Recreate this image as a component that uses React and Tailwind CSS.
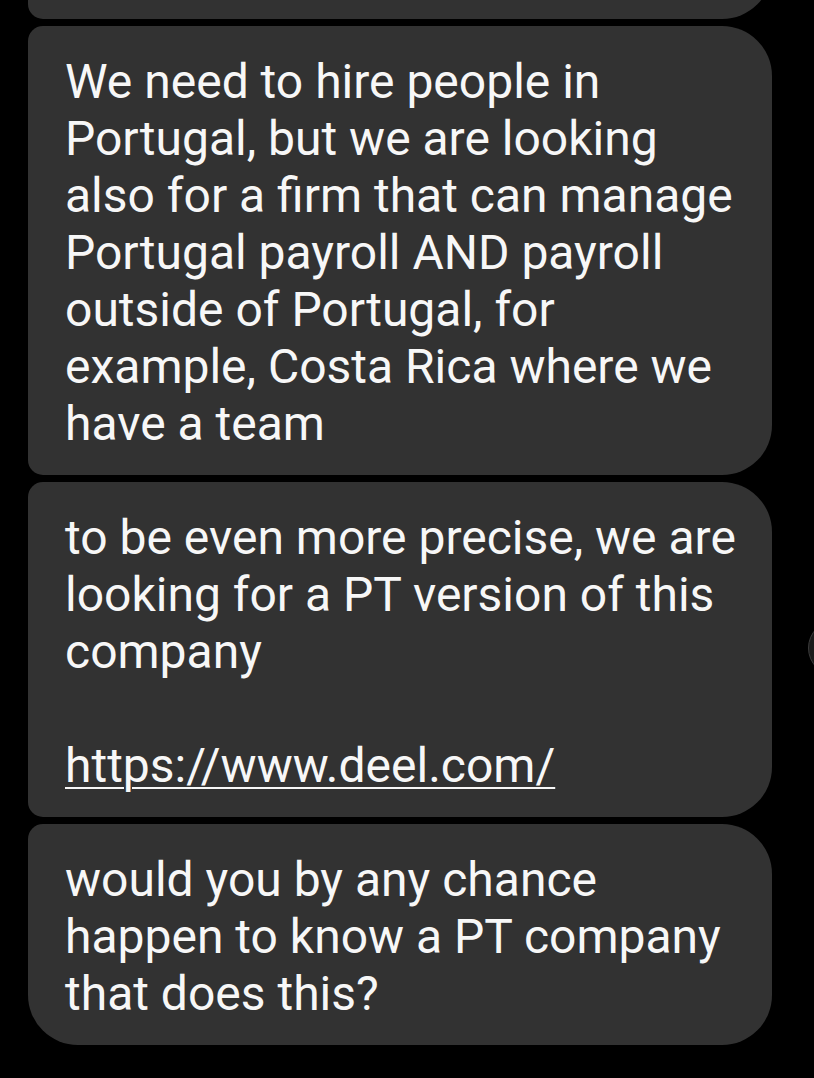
import React from 'react'

const messages = [
  {
    lines: [
      'We need to hire people in',
      'Portugal, but we are looking',
      'also for a firm that can manage',
      'Portugal payroll AND payroll',
      'outside of Portugal, for',
      'example, Costa Rica where we',
      'have a team',
    ],
    corners: 'rounded-tl-[15px] rounded-bl-[15px]',
  },
  {
    lines: [
      'to be even more precise, we are',
      'looking for a PT version of this',
      'company',
      '',
      { link: 'https://www.deel.com/' },
    ],
    corners: 'rounded-tl-[15px] rounded-bl-[15px]',
  },
  {
    lines: [
      'would you by any chance',
      'happen to know a PT company',
      'that does this?',
    ],
    corners: 'rounded-tl-[15px] rounded-bl-[50px]',
  },
]

const Bubble = ({ msg }) => {
  return (
    <div
      className={`w-[744px] bg-[#323232] text-[#f7f7f7] rounded-tr-[50px] rounded-br-[50px] pl-[37px] pr-4 pt-[27px] pb-[23px] ${msg.corners}`}
    >
      {msg.lines.map((line, i) =>
        typeof line === 'string' ? (
          <div key={i} className="h-[57px] whitespace-pre">
            {line || ' '}
          </div>
        ) : (
          <div key={i} className="h-[57px]">
            <span className="underline decoration-2 underline-offset-[5px]">
              {line.link}
            </span>
          </div>
        )
      )}
    </div>
  )
}

export default function App() {
  return (
    <div
      className="relative w-[814px] h-[1078px] overflow-hidden bg-black"
      style={{ fontFamily: 'Roboto, "Noto Sans", sans-serif' }}
    >
      <div className="flex flex-col gap-[7px] pl-[28px] text-[48px] leading-[57px]">
        {/* previous message, mostly scrolled away */}
        <div className="w-[744px] h-[79px] -mt-[60px] bg-[#323232] rounded-bl-[15px] rounded-br-[50px]" />
        {messages.map((msg, i) => (
          <Bubble key={i} msg={msg} />
        ))}
      </div>
      {/* scroll-to-bottom button peeking in from the edge */}
      <div className="absolute left-[808px] top-[620px] w-[56px] h-[56px] rounded-full bg-[#1b1b1b] border border-[#3c3c3c]" />
    </div>
  )
}
